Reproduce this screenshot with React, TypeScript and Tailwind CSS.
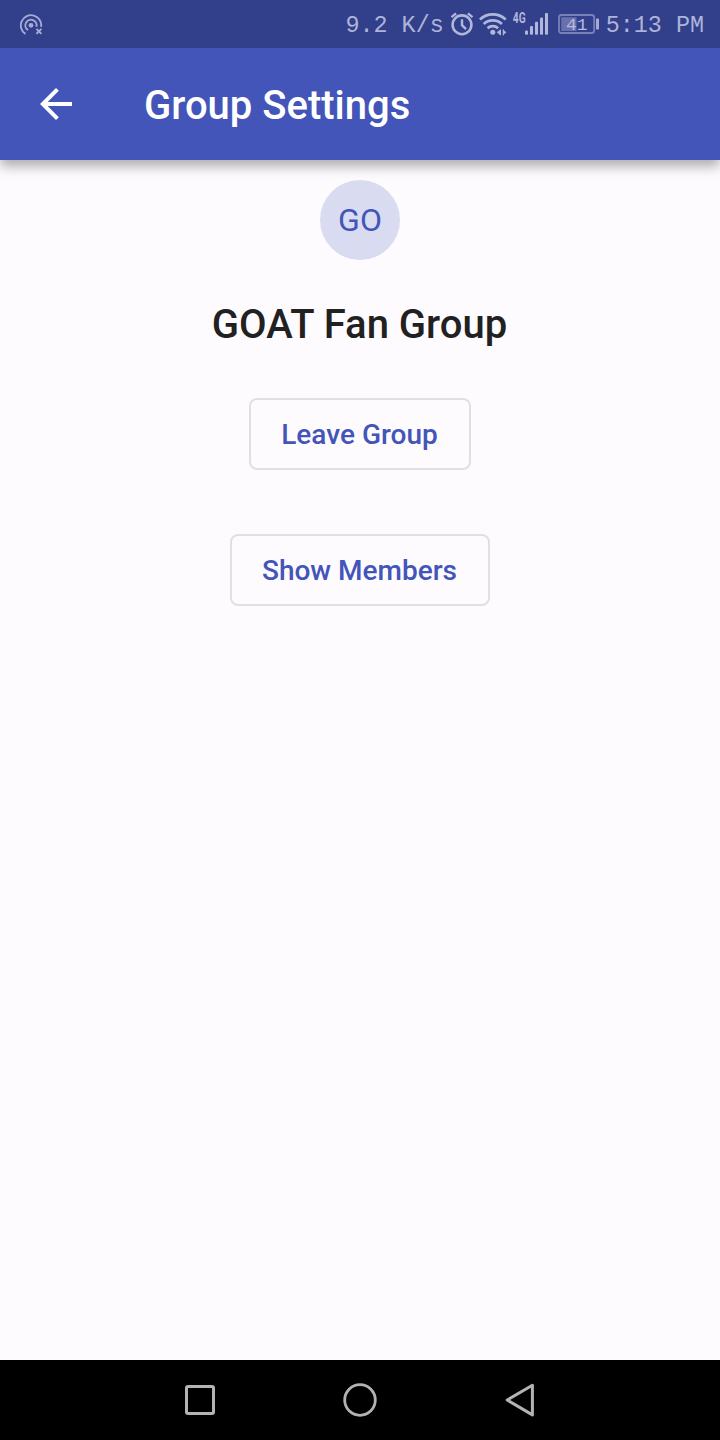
import React from "react";

function CastIcon() {
  return (
    <svg className="ml-5 h-12 w-6 shrink-0" viewBox="20 0 24 48" fill="none" stroke="#a5abd4" strokeWidth="1.9">
      <circle cx="31" cy="25.3" r="2.4" fill="#a5abd4" stroke="none" />
      <path d="M28 30.1A5.6 5.6 0 1 1 36.4 26.8" />
      <path d="M25.4 33.9A10.2 10.2 0 1 1 41.1 26.8" />
      <path d="M36.4 28.8l5 5M41.4 28.8l-5 5" strokeWidth="1.9" />
    </svg>
  );
}

function AlarmIcon() {
  return (
    <svg className="h-12 w-6 shrink-0" viewBox="450 0 24 48" fill="none" stroke="#b1b7da" strokeWidth="2.6">
      <circle cx="462" cy="24.8" r="9.4" />
      <path d="M462 19.2v6l4 4" strokeWidth="2.4" />
      <path d="M451.5 17.2l4.6-3.9M472.5 17.2l-4.6-3.9" strokeWidth="2.4" />
    </svg>
  );
}

function WifiIcon() {
  return (
    <svg className="ml-[5px] h-12 w-7 shrink-0" viewBox="479 0 28 48" fill="none" stroke="#b1b7da" strokeWidth="2.7">
      <path d="M479.9 19.4A19 19 0 0 1 505.7 19.4" />
      <path d="M483.7 24A13.2 13.2 0 0 1 501.9 24" />
      <path d="M487.5 28.2A7.8 7.8 0 0 1 498.1 28.2" />
      <circle cx="492.8" cy="32.2" r="2.5" fill="#b1b7da" stroke="none" />
      <path d="M496.8 32.3l3.3-2.6v5.2zM506.4 32.3l-3.2-2.6v5.2z" fill="#b1b7da" stroke="none" />
      <path d="M500.4 29.4v5.8M503.4 29.4v5.8" strokeWidth="1.2" />
    </svg>
  );
}

function SignalIcon() {
  return (
    <svg className="ml-1.5 h-12 w-9 shrink-0" viewBox="513 0 36 48" fill="#b1b7da">
      <g transform="translate(512.8 22.8) scale(0.72 1)">
        <text fontFamily="Roboto, sans-serif" fontWeight="700" fontSize="14.2">4G</text>
      </g>
      <rect x="525" y="30.6" width="3" height="4.2" rx="1" />
      <rect x="530" y="26" width="3" height="8.8" rx="1" />
      <rect x="535" y="21.8" width="3" height="13" rx="1" />
      <rect x="540" y="17.5" width="3" height="17.3" rx="1" />
      <rect x="545" y="13" width="3" height="21.8" rx="1" />
    </svg>
  );
}

function BatteryIcon() {
  return (
    <svg className="ml-[9px] h-12 w-[42px] shrink-0" viewBox="558 0 42 48">
      <rect x="559" y="15" width="35.2" height="18" rx="2.5" fill="none" stroke="#7881b8" strokeWidth="1.8" />
      <rect x="561.2" y="17.2" width="15.3" height="13.8" fill="#6871ac" />
      <rect x="596" y="18.5" width="3" height="11" rx="0.8" fill="#a5abd4" />
      <text x="566" y="29.9" fontFamily="Liberation Mono, monospace" fontSize="17.4" textLength="21.6" lengthAdjust="spacingAndGlyphs" fill="#b5badb">41</text>
    </svg>
  );
}

function StatusBar() {
  return (
    <div className="z-20 flex h-12 shrink-0 items-center justify-between bg-[#323f8a] font-['Liberation_Mono',monospace] text-[23.4px] leading-[48px] text-[#aeb4d9]">
      <CastIcon />
      <div className="flex items-center pr-4">
        <span className="mr-[6px] h-12 pt-[2px] whitespace-pre">9.2 K/s</span>
        <AlarmIcon />
        <WifiIcon />
        <SignalIcon />
        <BatteryIcon />
        <span className="ml-[6px] h-12 pt-[2px] whitespace-pre">5:13 PM</span>
      </div>
    </div>
  );
}

function OutlinedButton({ children, className }: { children: React.ReactNode; className: string }) {
  return (
    <button className={`flex h-[72px] items-center justify-center rounded-lg border-2 border-[#e0dfe3] pt-0.5 pr-px text-[28px] font-medium whitespace-nowrap text-[#4355b9] ${className}`}>
      {children}
    </button>
  );
}

export default function App() {
  return (
    <div className="flex h-[1440px] w-[720px] flex-col overflow-hidden bg-[#fefbff] font-['Roboto',sans-serif]">
      <StatusBar />
      <header className="z-10 flex h-28 shrink-0 items-center bg-[#4355b9] pl-8 text-white shadow-[0_6px_12px_rgba(0,0,0,0.33)]">
        <button aria-label="Back">
          <svg className="size-12" viewBox="0 0 24 24" fill="currentColor">
            <path d="M20 11H7.83l5.59-5.59L12 4l-8 8 8 8 1.41-1.41L7.83 13H20v-2z" />
          </svg>
        </button>
        <h1 className="ml-16 pt-1 text-[40px] font-medium">Group Settings</h1>
      </header>
      <main className="flex flex-1 flex-col items-center pt-5">
        <div className="flex size-20 items-center justify-center rounded-full bg-[#d9dcf0] text-[32px] text-[#4355b9]">GO</div>
        <h2 className="mt-[33px] pr-px text-[40px] leading-16 font-medium text-[#212121]">GOAT Fan Group</h2>
        <OutlinedButton className="mt-[41px] w-[222px]">Leave Group</OutlinedButton>
        <OutlinedButton className="mt-16 w-[260px]">Show Members</OutlinedButton>
      </main>
      <nav className="flex h-20 shrink-0 items-center justify-center gap-[120px] bg-black text-[#b3b3b3]">
        <svg className="size-10" viewBox="0 0 40 40" fill="none" stroke="currentColor" strokeWidth="3">
          <rect x="6.5" y="6.5" width="27" height="27" rx="1.5" />
        </svg>
        <svg className="size-10" viewBox="0 0 40 40" fill="none" stroke="currentColor" strokeWidth="2.8">
          <circle cx="20" cy="20" r="15.3" />
        </svg>
        <svg className="size-10" viewBox="0 0 40 40" fill="none" stroke="currentColor" strokeWidth="3" strokeLinejoin="round">
          <path d="M32.4 5.3v29.6L7.2 20z" />
        </svg>
      </nav>
    </div>
  );
}
